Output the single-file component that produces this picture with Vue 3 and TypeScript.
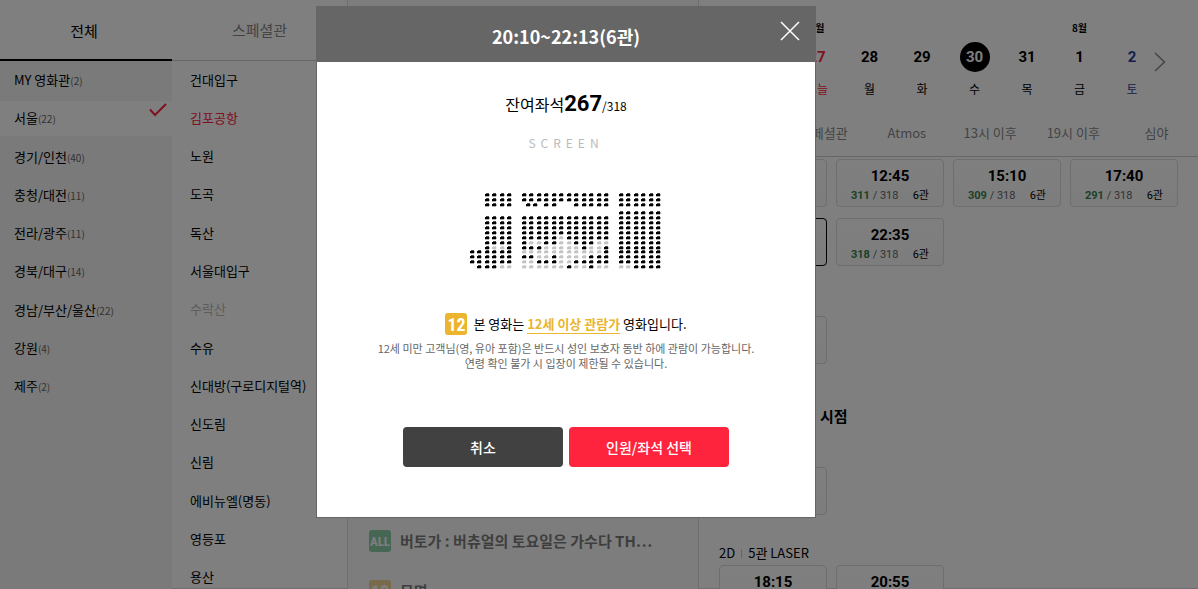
<script setup lang="ts">
interface Region { name: string; count: number; active?: boolean }
interface Cinema { name: string; state?: 'active' | 'closed' }
interface Day { month?: string; date: number; label: string; tone?: 'today' | 'sat' | 'selected' }
interface Session { time?: string; left?: number; total?: number; hall?: string; selected?: boolean }
interface Movie { rating: string; tone: 'all' | 'twelve'; title: string }
interface Seat { x: number; y: number; taken: boolean }

const regions: Region[] = [
  { name: 'MY 영화관', count: 2 },
  { name: '서울', count: 22, active: true },
  { name: '경기/인천', count: 40 },
  { name: '충청/대전', count: 11 },
  { name: '전라/광주', count: 11 },
  { name: '경북/대구', count: 14 },
  { name: '경남/부산/울산', count: 22 },
  { name: '강원', count: 4 },
  { name: '제주', count: 2 },
]

const cinemas: Cinema[] = [
  { name: '건대입구' },
  { name: '김포공항', state: 'active' },
  { name: '노원' },
  { name: '도곡' },
  { name: '독산' },
  { name: '서울대입구' },
  { name: '수락산', state: 'closed' },
  { name: '수유' },
  { name: '신대방(구로디지털역)' },
  { name: '신도림' },
  { name: '신림' },
  { name: '에비뉴엘(명동)' },
  { name: '영등포' },
  { name: '용산' },
]

const movies: Movie[] = [
  { rating: 'ALL', tone: 'all', title: '버토가 : 버츄얼의 토요일은 가수다 TH⋯' },
  { rating: '12', tone: 'twelve', title: '무명' },
]

const days: Day[] = [
  { month: '7월', date: 27, label: '오늘', tone: 'today' },
  { date: 28, label: '월' },
  { date: 29, label: '화' },
  { date: 30, label: '수', tone: 'selected' },
  { date: 31, label: '목' },
  { month: '8월', date: 1, label: '금' },
  { date: 2, label: '토', tone: 'sat' },
]

const filters: string[] = ['전체', '스페셜관', 'Atmos', '13시 이후', '19시 이후', '심야']

const mainSessions: Session[] = [
  {},
  { time: '12:45', left: 311, total: 318, hall: '6관' },
  { time: '15:10', left: 309, total: 318, hall: '6관' },
  { time: '17:40', left: 291, total: 318, hall: '6관' },
  { time: '20:10', left: 267, total: 318, hall: '6관', selected: true },
  { time: '22:35', left: 318, total: 318, hall: '6관' },
]

const laserSessions: Session[] = [{ time: '18:15' }, { time: '20:55' }]

// "#" free seat, "o" taken seat, "." no seat; blocks are separated by aisles
const rows: [number, string][] = [
  [0, '..####..############..######'],
  [5, '..####..############..######'],
  [10, '..####.....##..#####..######'],
  [18, '......................######'],
  [23, '..####..############..######'],
  [28, '..####..############..######'],
  [33, '..####..############..######'],
  [38, '..####..############..######'],
  [43, '..####..#####o######..######'],
  [48, '..####..#oo##oo###oo..######'],
  [53, '..#oo#..###ooooo#oo#..######'],
  [57, '######..ooooooooooo#..######'],
  [62, '######..##oo#oooo###..######'],
  [67, '######..oo###oo#####..######'],
  [72, '.###oo..oooooo#oo#oo..oo####'],
]

// the aisles are narrower than two seat positions
const seatX = (i: number): number => Math.floor(i * 7.5) - (i > 21 ? 16 : i > 7 ? 8 : 0)

const seats: Seat[] = rows.flatMap(([y, line]) =>
  [...line].flatMap((c, i) => (c === '.' ? [] : [{ x: seatX(i), y, taken: c === 'o' }])),
)
// the third row has a staggered pair next to the aisle
seats.push({ x: 56, y: 10, taken: false }, { x: 63, y: 10, taken: false })
</script>

<template>
  <div class="page">
    <main class="board">
      <section class="theaters">
        <nav class="tabs">
          <button class="tab on">전체</button>
          <button class="tab">스페셜관</button>
        </nav>
        <div class="lists">
          <ul class="regions">
            <li v-for="r in regions" :key="r.name">
              <button :class="['region', { on: r.active }]">
                <span>{{ r.name }}<small>({{ r.count }})</small></span>
                <svg v-if="r.active" class="check" viewBox="0 0 18 14" width="18" height="14">
                  <path d="M1 6.5 6 12 17 1" fill="none" stroke="currentColor" stroke-width="2" />
                </svg>
              </button>
            </li>
          </ul>
          <ul class="cinemas">
            <li v-for="c in cinemas" :key="c.name">
              <button :class="['cinema', c.state]">{{ c.name }}</button>
            </li>
          </ul>
        </div>
      </section>

      <section class="movies">
        <button v-for="m in movies" :key="m.title" class="movie">
          <span :class="['rate', m.tone]">{{ m.rating }}</span>
          <span>{{ m.title }}</span>
        </button>
      </section>

      <section class="schedule">
        <div class="calendar">
          <div class="days">
            <button v-for="d in days" :key="d.date" :class="['day', d.tone]">
              <span class="month">{{ d.month }}</span>
              <strong class="date">{{ d.date }}</strong>
              <span class="weekday">{{ d.label }}</span>
            </button>
          </div>
          <button class="next">
            <svg viewBox="0 0 12 20" width="12" height="20">
              <path d="M1 1 10.500 10 1 19" fill="none" stroke="currentColor" stroke-width="1.500" />
            </svg>
          </button>
        </div>
        <nav class="filters">
          <button v-for="f in filters" :key="f">{{ f }}</button>
        </nav>
        <div class="sessions">
          <button v-for="(s, i) in mainSessions" :key="i" :class="['session', { selected: s.selected }]">
            <template v-if="s.time">
              <strong>{{ s.time }}</strong>
              <span class="info"><span><b>{{ s.left }}</b> / {{ s.total }}</span><em>{{ s.hall }}</em></span>
            </template>
          </button>
        </div>
        <div class="sessions second"><button class="session"></button></div>
        <h3 class="title"><span>시점</span></h3>
        <div class="sessions third"><button class="session"></button></div>
        <p class="hall"><span>2D</span><i></i><span>5관 LASER</span></p>
        <div class="sessions last">
          <button v-for="s in laserSessions" :key="s.time" class="session"><strong>{{ s.time }}</strong></button>
        </div>
      </section>
    </main>

    <div class="dim"></div>

    <div class="modal" role="dialog" aria-modal="true">
      <header class="modal-head">
        <h2>20:10~22:13(6관)</h2>
        <button class="close">
          <svg viewBox="0 0 20 20" width="20" height="20">
            <path d="M1 1 19 19M19 1 1 19" fill="none" stroke="currentColor" stroke-width="1.500" />
          </svg>
        </button>
      </header>
      <div class="modal-body">
        <p class="remain">잔여좌석<strong>267</strong><span>/318</span></p>
        <p class="screen">SCREEN</p>
        <svg class="seats" viewBox="0 0 192 78" width="192" height="78">
          <g v-for="(s, i) in seats" :key="i" :class="{ taken: s.taken }">
            <rect :x="s.x + 1" :y="s.y" width="3" height="1" opacity="0.7" />
            <rect :x="s.x" :y="s.y + 1" width="4" height="2" />
            <rect :x="s.x + 4" :y="s.y + 1" width="1" height="2" opacity="0.3" />
            <rect :x="s.x" :y="s.y + 3" width="4" height="1" opacity="0.3" />
          </g>
        </svg>
        <p class="notice">
          <span class="rate twelve">12</span>
          <span>본 영화는 <mark>12세 이상 관람가</mark> 영화입니다.</span>
        </p>
        <p class="detail">12세 미만 고객님(영, 유아 포함)은 반드시 성인 보호자 동반 하에 관람이 가능합니다.<br />연령 확인 불가 시 입장이 제한될 수 있습니다.</p>
        <div class="actions">
          <button>취소</button>
          <button class="primary">인원/좌석 선택</button>
        </div>
      </div>
    </div>
  </div>
</template>

<style>
body {
  margin: 0;
}
</style>

<style scoped>
.page {
  position: relative;
  height: 100vh;
  overflow: hidden;
  background: #fff;
  color: #000;
  font: 13px/20px "Noto Sans CJK KR", sans-serif;
}
.page * {
  box-sizing: border-box;
}
button {
  margin: 0;
  padding: 0;
  border: 0;
  background: none;
  color: inherit;
  font: inherit;
}
h2, h3, p, ul {
  margin: 0;
  padding: 0;
}
ul {
  list-style: none;
}
.board {
  display: grid;
  grid-template-columns: 348px 351px 1fr;
  height: 100%;
  border-bottom: 1px solid #ddd;
}
.theaters {
  border-right: 1px solid #ddd;
}
.tabs {
  display: grid;
  grid-template-columns: 172px 1fr;
  height: 61px;
}
.tab {
  border-bottom: 1px solid #ccc;
  color: #888;
  font-size: 15px;
}
.tab.on {
  border-bottom: 2px solid #000;
  padding: 2px 4px 0 0;
  color: #000;
}
.lists {
  display: grid;
  grid-template-columns: 172px 1fr;
  align-items: start;
  min-height: 100%;
  background: linear-gradient(90deg, #f4f4f4 172px, transparent 172px);
}
.regions,
.cinemas {
  display: flex;
  flex-direction: column;
  justify-content: space-between;
}
.regions {
  height: 343px;
  padding-top: 2px;
}
.cinemas {
  height: 534px;
  padding-top: 1px;
}
.region {
  display: flex;
  align-items: center;
  justify-content: space-between;
  width: 100%;
  height: 35px;
  padding: 0 5px 0 14px;
}
.region.on {
  background: #fff;
}
.region small {
  color: #666;
  font-size: 10px;
}
.check {
  align-self: flex-start;
  margin-top: 2px;
  color: #ff243e;
}
.cinema {
  display: block;
  height: 35px;
  padding-left: 18px;
}
.cinema.active {
  color: #ff243e;
}
.cinema.closed {
  color: #bbb;
}
.movies {
  display: flex;
  flex-direction: column;
  padding-top: 516px;
  border-right: 1px solid #ddd;
  background: #fafafa;
  overflow: hidden;
}
.movie {
  display: flex;
  flex: none;
  align-items: center;
  gap: 9px;
  height: 50px;
  padding-left: 21px;
  font-size: 15px;
  font-weight: 700;
  opacity: 0.5;
}
.rate {
  flex: none;
  width: 22px;
  height: 22px;
  border-radius: 3px;
  color: #fff;
  font: 700 18px/23px "Liberation Sans Narrow", "Roboto Condensed", Roboto, sans-serif;
  text-align: center;
}
.rate.all {
  background: #22a35a;
  font-size: 13px;
}
.rate.twelve {
  background: #ebb52d;
}
.schedule {
  overflow: hidden;
}
.calendar {
  display: flex;
  height: 110px;
  padding: 18px 32px 0 98px;
}
.days {
  display: flex;
  flex: 1;
  justify-content: space-between;
}
.day {
  display: flex;
  flex-direction: column;
  align-items: center;
  width: 40px;
}
.month {
  height: 20px;
  font-size: 10px;
  font-weight: 700;
}
.date {
  width: 30px;
  height: 30px;
  margin: 4px 0 7px;
  border-radius: 15px;
  font: 700 15px/30px Roboto, sans-serif;
}
.weekday {
  font-size: 12px;
}
.day.today {
  color: #ff243e;
}
.day.today .month {
  color: #000;
}
.day.sat {
  color: #2b3f9e;
}
.day.selected .date {
  background: #000;
  color: #fff;
}
.next {
  align-self: flex-start;
  height: 20px;
  margin: 34px 0 0 2px;
  color: #888;
}
.next svg {
  display: block;
}
.filters {
  display: grid;
  grid-template-columns: repeat(6, 1fr);
  height: 47px;
  border-bottom: 1px solid #ccc;
  color: #888;
}
.sessions {
  display: grid;
  grid-template-columns: repeat(4, 108px);
  gap: 11px 9px;
  padding: 2px 20px 0;
}
.session {
  display: flex;
  flex-direction: column;
  height: 48px;
  padding: 6px 14px 0;
  border: 1px solid #ddd;
  border-radius: 4px;
  background: linear-gradient(#fff, #fafafa);
  font-family: Roboto, "Noto Sans CJK KR", sans-serif;
}
.session.selected {
  border-color: #000;
}
.session strong {
  align-self: center;
  font-size: 15px;
}
.info {
  display: flex;
  align-self: stretch;
  justify-content: space-between;
  color: #666;
  font-size: 11px;
}
.info b {
  color: #37824f;
}
.info em {
  color: #000;
  font-style: normal;
}
.second {
  padding-top: 50px;
}
.title {
  padding: 42px 0 0 121px;
  font-size: 15px;
}
.third {
  padding-top: 41px;
}
.hall {
  display: flex;
  align-items: center;
  gap: 6px;
  padding: 28px 20px 0;
}
.hall i {
  width: 1px;
  height: 9px;
  background: #ccc;
}
.last {
  padding-top: 2px;
}
.dim {
  position: absolute;
  inset: 0;
  background: rgba(0, 0, 0, 0.5);
}
.modal {
  position: absolute;
  top: 6px;
  left: 316px;
  width: 500px;
  border: 1px solid #666;
  background: #fff;
}
.modal-head {
  display: flex;
  align-items: center;
  justify-content: center;
  height: 55px;
  background: #666;
  color: #fff;
}
.modal-head h2 {
  padding-top: 2px;
  font-size: 18px;
}
.close {
  position: absolute;
  top: 14px;
  right: 15px;
  height: 20px;
}
.close svg {
  display: block;
}
.modal-body {
  display: flex;
  flex-direction: column;
  align-items: center;
  padding: 26px 0 50px;
}
.remain {
  font-size: 16px;
  line-height: 32px;
}
.remain strong {
  font-family: Roboto, sans-serif;
  font-size: 22px;
}
.remain span {
  font-size: 12px;
}
.screen {
  margin-top: 11px;
  color: #bbb;
  font-size: 12px;
  letter-spacing: 5px;
}
.seats {
  display: block;
  margin-top: 40px;
  shape-rendering: crispEdges;
}
.seats .taken {
  fill: #c4c4c4;
}
.notice {
  display: flex;
  align-items: center;
  gap: 6px;
  margin-top: 42px;
}
.notice mark {
  border-bottom: 1px solid #ebb52d;
  background: none;
  color: #ebb52d;
  font-weight: 700;
}
.detail {
  margin-top: 6px;
  color: #666;
  font-size: 11px;
  line-height: 15px;
  text-align: center;
}
.actions {
  display: flex;
  gap: 6px;
  margin-top: 56px;
}
.actions button {
  width: 160px;
  height: 40px;
  border-radius: 4px;
  background: #414141;
  color: #fff;
  font-size: 14px;
  font-weight: 500;
}
.actions .primary {
  background: #ff243e;
}
</style>
